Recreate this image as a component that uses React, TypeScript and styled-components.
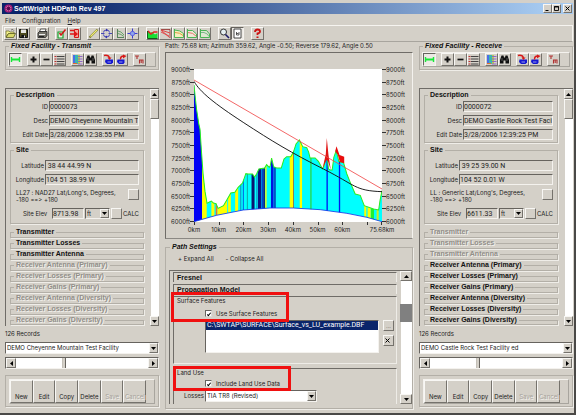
import React from 'react';
import styled, { createGlobalStyle, css } from 'styled-components';

const FACE = '#d4d0c8';
const NAVY = '#0a246a';
const DARK = '#6f6c67';
const EDGE = '#b3afa7';

const Global = createGlobalStyle`
  *, *::before, *::after { box-sizing: border-box; }
  html, body { margin: 0; padding: 0; }
  body {
    background: ${FACE};
    color: #222;
    font: 6px/8px Inter, "Liberation Sans", sans-serif;
    font-feature-settings: "calt" 0;
  }
  button, input, select { font: inherit; color: inherit; margin: 0; padding: 0; border-radius: 0; }
  fieldset { margin: 0; min-width: 0; }
  svg { display: block; }
`;

const raised = css`
  border: 1px solid;
  border-color: #f8f7f4 #75726c #75726c #f8f7f4;
  background: ${FACE};
`;
const sunken = css`
  border: 1px solid;
  border-color: #66635e #f4f2ee #f4f2ee #66635e;
`;

const Window = styled.div`
  min-height: 100vh;
  display: flex;
  flex-direction: column;
  background: ${FACE};
  border-right: 2px solid #4a4947;
  border-bottom: 2px solid #4a4947;
`;
const TitleBar = styled.header`
  display: flex;
  align-items: center;
  height: 11px;
  margin: 3px 1px 0 2px;
  padding: 0 1px 0 2px;
  color: #fff;
  background: linear-gradient(90deg, #0a246a 10%, #a6caf0 95%);
`;
const Title = styled.h1`
  flex: 1;
  margin: 0 0 0 1px;
  font: bold 7px/10px "Liberation Sans", sans-serif;
`;
const CaptionButton = styled.button`
  ${raised}
  width: 9px;
  height: 9px;
  &:last-child { margin-left: 2px; }
`;
const Menu = styled.nav`
  display: flex;
  gap: 7px;
  padding: 1px 5px 0;
  height: 11px;
`;
const MenuItem = styled.button`
  border: 0;
  background: none;
  line-height: 9px;
`;
const ToolBar = styled.div`
  display: flex;
  height: 17px;
  margin: 0 1px 0 2px;
  padding: 1px 0 0 1px;
  border: 1px solid;
  border-color: #f6f4f0 #f6f4f0 #a8a59e #f6f4f0;
`;
const ToolGroup = styled.div<{ $lead?: number }>`
  display: flex;
  margin-left: ${p => p.$lead ?? 0}px;
`;
const ToolButton = styled.button<{ $down?: boolean }>`
  ${p => (p.$down ? sunken : raised)}
  width: 13px;
  height: 13px;
  background: ${p => (p.$down ? '#ece9e4' : FACE)};
`;
const Columns = styled.main`
  flex: 1;
  display: grid;
  grid-template-columns: 154fr 248fr 154fr;
  gap: 6px;
  padding: 0 1px 4px 5px;
`;
const Column = styled.section`
  display: flex;
  flex-direction: column;
  min-width: 0;
`;
const Box = styled.fieldset`
  border: 1px solid ${EDGE};
  box-shadow: 1px 1px 0 #efede8;
  padding: 2px;
`;
const ScriptLegend = styled.legend`
  margin-left: 1px;
  padding: 0 2px;
  color: #111;
  font: italic bold 7px/8px "Liberation Sans", sans-serif;
`;
const Legend = styled.legend<{ $off?: boolean }>`
  padding: 0 2px;
  font: bold 7px/8px "Liberation Sans", sans-serif;
  color: ${p => (p.$off ? '#918e88' : '#111')};
  text-shadow: ${p => (p.$off ? '1px 1px 0 #f1efeb' : 'none')};
`;
const FacilityBar = styled.div`
  display: flex;
  gap: 5px;
  border: 1px solid;
  border-color: #f4f2ee #a8a59e #a8a59e #f4f2ee;
`;
const ScrollFrame = styled.div<{ $top: number }>`
  display: flex;
  flex: 1;
  margin-top: ${p => p.$top}px;
  border-top: 1px solid ${DARK};
  border-left: 1px solid ${DARK};
`;
const ScrollBody = styled.div`
  flex: 1;
  min-width: 0;
  padding: 2px 6px 0 4px;
`;
const ScrollTrack = styled.div<{ $w: number }>`
  display: flex;
  flex-direction: column;
  justify-content: space-between;
  width: ${p => p.$w}px;
  background: linear-gradient(90deg, ${FACE} 1px, #fff 1px);
`;
const ArrowButton = styled.button`
  ${raised}
  display: grid;
  place-items: center;
  height: 10px;
  min-width: 9px;
`;
const TopThumb = styled.div`
  ${raised}
  height: 20px;
  margin-bottom: auto;
`;
const DarkThumb = styled.div`
  height: 18px;
  margin: 23px 0 auto;
  background: #808080;
`;
const Details = styled(Box)<{ $lead: number; $top?: number; $end: number }>`
  display: flex;
  flex-direction: column;
  gap: 3px;
  margin-top: ${p => p.$top ?? 0}px;
  padding: ${p => p.$lead}px 4px ${p => p.$end}px 3px;
`;
const Field = styled.label<{ $label: number }>`
  display: grid;
  grid-template-columns: ${p => p.$label}px minmax(0, 1fr);
  column-gap: 1px;
  text-align: right;
  line-height: 12px;
  height: 11px;
`;
const TextInput = styled.input`
  ${sunken}
  width: 100%;
  min-width: 0;
  height: 11px;
  background: ${FACE};
  font: 7px/9px Roboto, sans-serif;
  outline: 0;
`;
const DatumRow = styled.div`
  display: flex;
  justify-content: space-between;
  align-items: flex-start;
  height: 14px;
  margin: 1px 0 2px 2px;
  line-height: 7px;
  white-space: nowrap;
`;
const TinyButton = styled.button`
  ${raised}
  flex: none;
  width: 11px;
  height: 11px;
  line-height: 8px;
  text-align: center;
  color: #6d6a66;
`;
const ElevRow = styled.div`
  display: flex;
  align-items: center;
  gap: 1px;
  height: 11px;
  margin-left: 9px;
`;
const ElevField = styled.label`
  display: grid;
  grid-template-columns: 28px 32px;
  column-gap: 1px;
  align-items: center;
`;
const Combo = styled.label<{ $flat?: boolean }>`
  ${sunken}
  display: flex;
  height: 12px;
  min-width: 0;
  background: ${p => (p.$flat ? FACE : '#fff')};
`;
const Select = styled.select`
  flex: 1;
  min-width: 0;
  appearance: none;
  border: 0;
  padding-left: 1px;
  background: transparent;
  line-height: 10px;
  outline: 0;
`;
const DropMark = styled.span`
  ${raised}
  display: grid;
  place-items: center;
  width: 9px;
`;
const UnitCombo = styled(Combo)`
  width: 26px;
  height: 11px;
`;
const Section = styled(Box)`
  margin-bottom: 1px;
  padding: 0 3px 1px;
  cursor: pointer;
  &:last-child { margin-bottom: 0; padding-bottom: 0; }
`;
const Sections = styled.div`
  margin-top: 4px;
`;
const Footer = styled.footer`
  margin-bottom: 2px;
`;
const Records = styled.p`
  margin: 4px 0 4px;
`;
const Scroller = styled.div`
  display: grid;
  grid-template-columns: 10px 1fr 10px;
  height: 12px;
  margin: 3px 0 6px;
  ${sunken}
  background: #fff;
`;
const Range = styled.input`
  appearance: none;
  width: 100%;
  height: 10px;
  background: #fff;
  &::-webkit-slider-thumb {
    appearance: none;
    width: 4px;
    height: 10px;
    background: ${FACE};
    border-right: 1px solid #66635e;
    border-left: 1px solid #c4c0b8;
  }
`;
const Actions = styled.div`
  border: 1px solid ${EDGE};
  box-shadow: 1px 1px 0 #efede8;
  padding: 3px 3px 2px;
`;
const ActionBar = styled.div`
  display: grid;
  grid-template-columns: repeat(6, 23fr) 8fr;
  border: 1px solid;
  border-color: #f4f2ee #a8a59e #a8a59e #f4f2ee;
`;
const ActionButton = styled.button`
  ${raised}
  display: flex;
  align-items: flex-end;
  justify-content: center;
  height: 23px;
  padding-bottom: 1px;
  &:disabled { color: #a5a29b; text-shadow: 1px 1px 0 #f4f2ee; }
`;
const PathLine = styled.p`
  margin: 0 0 2px;
  line-height: 8px;
  white-space: nowrap;
`;
const ChartPanel = styled.div`
  border: 1px solid;
  border-color: ${DARK} #f4f2ee #8b8883 ${DARK};
  margin-bottom: 4px;
`;
const Chart = styled.svg`
  width: 100%;
  height: auto;
  font: 6px Inter, sans-serif;
`;
const Settings = styled(Box)`
  flex: 1;
  display: flex;
  flex-direction: column;
  padding: 4px 0 4px 3px;
`;
const Expanders = styled.div`
  display: flex;
  gap: 12px;
  padding-left: 9px;
`;
const PlainButton = styled.button`
  border: 0;
  background: none;
`;
const SettingsBody = styled.div`
  flex: 1;
  display: flex;
  flex-direction: column;
  gap: 2px;
  min-width: 0;
  padding: 1px 3px 0;
`;
const Pane = styled.div`
  position: relative;
  border-top: 1px solid ${DARK};
  border-left: 1px solid ${DARK};
  border-right: 1px solid #eeece7;
  padding-left: 3px;
`;
const HeadPane = styled(Pane)`
  height: 10px;
  font: bold 7px/9px "Liberation Sans", sans-serif;
  color: #111;
`;
const SurfacePane = styled(Pane)`
  height: 68px;
  border-bottom: 1px solid #eeece7;
`;
const LandPane = styled(Pane)`
  margin-top: 2px;
  min-height: 36px;
`;
const Check = styled.label<{ $top: number }>`
  display: flex;
  align-items: center;
  gap: 4px;
  height: 9px;
  margin: ${p => p.$top}px 0 2px 28px;
`;
const Tick = styled.input`
  appearance: none;
  display: grid;
  place-items: center;
  width: 7px;
  height: 7px;
  background: #fff;
  border: 1px solid;
  border-color: #66635e #dedbd5 #dedbd5 #66635e;
  &:checked::before {
    content: '';
    width: 2px;
    height: 4px;
    border: solid #000;
    border-width: 0 1px 1px 0;
    transform: rotate(40deg);
  }
`;
const FileArea = styled.div`
  display: flex;
  gap: 4px;
  margin: 0 2px 0 28px;
`;
const FileList = styled.ul`
  ${sunken}
  flex: 1;
  height: 33px;
  margin: 0;
  padding: 0;
  list-style: none;
  background: #fff;
`;
const FileItem = styled.li`
  padding-left: 1px;
  color: #fff;
  background: ${NAVY};
  font: 7px/9px Roboto, sans-serif;
`;
const FileButtons = styled.div`
  display: flex;
  flex-direction: column;
  gap: 4px;
`;
const LossRow = styled.div`
  display: grid;
  grid-template-columns: 27px 112px;
  column-gap: 1px;
  align-items: center;
  text-align: right;
`;
const Highlight = styled.div<{ $x: number; $y: number; $h: number }>`
  position: absolute;
  left: ${p => p.$x}px;
  top: ${p => p.$y}px;
  width: 118px;
  height: ${p => p.$h}px;
  border: 3px solid #f01010;
  pointer-events: none;
`;

type Dir = 'up' | 'down' | 'left' | 'right';
const arrows: Record<Dir, string> = {
  up: 'M0 4L2.500 1L5 4Z',
  down: 'M0 1L5 1L2.500 4Z',
  left: 'M4 0L1 2.500L4 5Z',
  right: 'M1 0L4 2.500L1 5Z',
};
const Arrow = ({ dir }: { dir: Dir }) => (
  <svg width="5" height="5" viewBox="0 0 5 5"><path d={arrows[dir]} fill="#000" /></svg>
);

const glyphs: Record<string, React.ReactNode> = {
  open: <><path d="M1 3h3l1 1h4v2H3L1 9z" fill="#f4f28a" stroke="#66662a" strokeWidth=".7" /><path d="M1 9.500L3.500 5.500H10.500L8.500 9.500z" fill="#d8d868" stroke="#4c4c18" strokeWidth=".7" /><path d="M6 2q2-1.500 3 .7" stroke="#333" fill="none" strokeWidth=".6" /></>,
  save: <><path d="M1.500 1.500h8v8h-8z" fill="#4c4a1c" stroke="#111" /><path d="M3 1.500h5v3.500H3z" fill="#e6e6e0" /><path d="M3.500 7h4v3h-4z" fill="#111" /><path d="M6 7.500h1v2H6z" fill="#ddd" /></>,
  print: <><path d="M3.500 1h5.500l-1 3H2.500z" fill="#fff" stroke="#333" strokeWidth=".8" /><path d="M1 5l1.500-1.500h7.500v4L8.500 9.500H1z" fill="#77756c" stroke="#222" strokeWidth=".8" /><path d="M2 6.500h6" stroke="#eee" /><path d="M2 8.500h5" stroke="#222" /></>,
  check: <><path d="M2 4h5v6H2z" fill="#e8f4e4" stroke="#17a02c" strokeWidth="1.200" /><path d="M3.500 5l1.500 2 4.500-5.500" fill="none" stroke="#d01818" strokeWidth="1.500" /></>,
  exit: <><path d="M5.500 1.500h4v8h-4z" fill="#f5a59c" stroke="#d21818" /><path d="M1 2.500h4M1 6h6M5 3.500l3 2.500-3 2.500" fill="none" stroke="#e01818" strokeWidth="1.400" /></>,
  pencil: <><path d="M1.500 9.500L9.500 1.500" stroke="#77772a" strokeWidth="2" /><path d="M2.500 8.500L9 2" stroke="#f1ee76" strokeWidth="1.100" /></>,
  cycle: <><path d="M2.500 4.500Q2.500 2 5.500 2T8.500 4.500M8.500 6.500q0 2.500-3 2.500T2.500 6.500" fill="none" stroke="#4848b8" /><path d="M0 5.500h3.500M7.500 5.500h3.500" stroke="#4848b8" /><path d="M5 .5l2 1.500-2 1.500zM6 7.500l-2 1.500 2 1.500z" fill="#3030b0" /></>,
  profile: <><path d="M3.500 1v9M3.500 9.500h6.500" stroke="#56835a" /><path d="M4 3l3 1 3 3M4 5.500l3 1 3 2" fill="none" stroke="#6aa76c" /></>,
  cross: <><path d="M5.500 .5v10M.5 5.500h10" stroke="#3a3ad0" /><circle cx="5.500" cy="5.500" r="2.200" fill="#8da3ee" stroke="#4848d8" strokeWidth=".7" /></>,
  terrain: <><path d="M.5 3v7.500h10V5L8 6.500 5 4 3 5z" fill="#18df34" /><path d="M1 3l3 3 3-2 3.500 0" stroke="#e02222" fill="none" strokeWidth="1.500" /><path d="M.5 3v7.500h10" fill="none" stroke="#145a1c" /></>,
  fan: <><path d="M1 1.500h9v8.500" fill="none" stroke="#8a1414" strokeWidth=".7" /><path d="M1 2L9.500 9.500M1 4l8 4M1 2l9 3" stroke="#e04848" /></>,
  curveA: <><path d="M1.500 1v8.500h9V5.500Q7 2 1.500 2" fill="#f4efc0" stroke="#3cb04a" strokeWidth=".9" /><path d="M2 4.500q5 0 8 3" stroke="#e0a044" fill="none" /></>,
  curveB: <><path d="M1.500 1v8.500h9V6L6.500 2.500H2" fill="#efe8d8" stroke="#3cb04a" strokeWidth=".9" /><path d="M2 4.500q5 0 8 3.500" stroke="#e07a6a" fill="none" /></>,
  curveC: <><path d="M1.500 1v8.500h9V6L7.500 2.500H2" fill="#dfe7d2" stroke="#3cb04a" strokeWidth=".9" /><path d="M2 4.500h3q4 1 5 4" stroke="#7ab88a" fill="none" /></>,
  zoom: <><circle cx="4.500" cy="4" r="3" fill="#e6f0f2" stroke="#222" strokeWidth=".9" /><path d="M6.500 6.500l3.500 3.500" stroke="#1a1a66" strokeWidth="1.600" /></>,
  page: <><path d="M2 1h7v9H2z" fill="#fff" stroke="#333" strokeWidth=".9" /><path d="M4.500 4v3h2.500V4M4.500 5.500h2" stroke="#333" fill="none" strokeWidth=".8" /></>,
  help: <><path d="M3 4q0-2.500 2.500-2.500T8 3.500Q8 5 5.500 5.500V7" fill="none" stroke="#cc1414" strokeWidth="1.800" /><path d="M4.500 8.500h2v1.500h-2z" fill="#cc1414" /></>,
  link: <><path d="M1.500 3v5M9.500 3v5" stroke="#18e838" strokeWidth="1.400" /><path d="M1 5.500h9" stroke="#18e838" strokeWidth="2" /></>,
  plus: <path d="M5.500 2.500v6M2.500 5.500h6" stroke="#111" strokeWidth="2" />,
  minus: <path d="M2.500 5.500h6" stroke="#111" strokeWidth="1.700" />,
  list: <><path d="M3 2.500h7.500M3 5h7.500M3 7.500h7.500M3 10h7.500" stroke="#333" strokeWidth=".9" /><path d="M.5 2.500h2M.5 5h2M.5 7.500h2M.5 10h2" stroke="#c03030" /></>,
  colors: <><path d="M1 1h3v9H1z" fill="#4a6fe8" /><path d="M3 1h3v9H3z" fill="#39b7b0" /><path d="M6 1h2v9H6z" fill="#b8cc50" /><path d="M6 2.500h4.500M6 5h4.500M6 7.500h4.500M6 10h4.500" stroke="#8a5bc8" strokeWidth=".9" /><path d="M1 9.500h4" stroke="#e06a30" /></>,
  find: <><path d="M2.500 1.500h2l.5 2h1l.5-2h2L10 6v3.500H6.500V6.500h-2v3H1V6z" fill="#111" /><path d="M3 4v3M8 4v3" stroke="#888" strokeWidth=".6" /></>,
  fetch: <><path d="M2.500 5.500h7.500v3L8.500 10H4L2 8z" fill="#1518d0" /><path d="M1 1.500q4.500-1 5.500 2.500" fill="none" stroke="#d81818" strokeWidth="1.400" /><path d="M4.500 3.500h4l-2 2.500z" fill="#d81818" /><path d="M4.500 8h3.500" stroke="#cfd0f6" strokeWidth=".7" /></>,
  send: <><path d="M1.500 5.500h7v3L7.500 10H3L1 8z" fill="#1518d0" /><path d="M4.500 5.500q0-3.500 3-3.500" fill="none" stroke="#d81818" strokeWidth="1.400" /><path d="M7 .5v4l3.500-2.500z" fill="#d81818" /><path d="M3 8h3.500" stroke="#cfd0f6" strokeWidth=".7" /></>,
  tower: <><path d="M1 2h4M3 2v3" stroke="#b03030" strokeWidth="1.100" /><path d="M5.500 9.500V5.500M9 9.500V5.500M5 6h4.500M7.200 6v3" fill="none" stroke="#b03030" strokeWidth="1.100" /></>,
  minimize: <path d="M1.500 5.500h3" stroke="#000" />,
  maximize: <path d="M1.500 1.500h4v4h-4zM1 2h5" stroke="#000" fill="none" strokeWidth=".9" />,
  close: <path d="M1.500 1.500l4 4M5.500 1.500l-4 4" stroke="#000" />,
};
const Glyph = ({ name, size = 11 }: { name: string; size?: number }) => (
  <svg width={size} height={size} viewBox={`0 0 ${size} ${size}`} aria-hidden="true">{glyphs[name]}</svg>
);

const mainTools: { lead: number; items: string[] }[] = [
  { lead: 0, items: ['open', 'save'] },
  { lead: 6, items: ['print'] },
  { lead: 6, items: ['check', 'exit'] },
  { lead: 6, items: ['pencil', 'cycle', 'profile', 'cross'] },
  { lead: 7, items: ['terrain', 'fan', 'curveA', 'curveB', 'curveC'] },
  { lead: 7, items: ['zoom', 'page'] },
  { lead: 7, items: ['help'] },
];
const facilityTools = [['link'], ['plus', 'minus', 'list'], ['colors', 'find'], ['fetch', 'send'], ['tower']];
const sections = [
  'Transmitter', 'Transmitter Losses', 'Transmitter Antenna',
  'Receiver Antenna (Primary)', 'Receiver Losses (Primary)', 'Receiver Gains (Primary)',
  'Receiver Antenna (Diversity)', 'Receiver Losses (Diversity)', 'Receiver Gains (Diversity)',
];

interface Facility {
  role: 'Transmit' | 'Receive';
  id: string; desc: string; date: string; lat: string; lon: string;
  datum: string; elev: string; record: string;
}
const transmit: Facility = {
  role: 'Transmit', id: '0000073', desc: 'DEMO Cheyenne Mountain Test Facility', date: '3/28/2006 12:38:55 PM',
  lat: ' 38 44 44.99 N', lon: '104 51 38.99 W', datum: "LL27 : NAD27 Lat/Long's, Degrees,",
  elev: '8713.98', record: 'DEMO Cheyenne Mountain Test Facility',
};
const receive: Facility = {
  role: 'Receive', id: '0000072', desc: 'DEMO Castle Rock Test Facility ed', date: '3/28/2006 12:39:25 PM',
  lat: ' 39 25 39.00 N', lon: '104 52 0.01 W', datum: "LL : Generic Lat/Long's, Degrees,",
  elev: '6611.33', record: 'DEMO Castle Rock Test Facility ed',
};

function FacilityColumn({ data }: { data: Facility }) {
  const sending = data.role === 'Transmit';
  return (
    <Column>
      <Box>
        <ScriptLegend>Fixed Facility - {data.role}</ScriptLegend>
        <FacilityBar>
          {facilityTools.map(group => (
            <ToolGroup key={group[0]}>
              {group.map(n => <ToolButton key={n} $down={n === 'link'} aria-label={n}><Glyph name={n} /></ToolButton>)}
            </ToolGroup>
          ))}
        </FacilityBar>
      </Box>
      <ScrollFrame $top={18}>
        <ScrollBody>
          <Details $lead={2} $end={2}>
            <Legend>Description</Legend>
            <Field $label={34}>ID<TextInput defaultValue={data.id} /></Field>
            <Field $label={34}>Desc<TextInput defaultValue={data.desc} /></Field>
            <Field $label={34}>Edit Date<TextInput defaultValue={data.date} /></Field>
          </Details>
          <Details $top={3} $lead={6} $end={4}>
            <Legend>Site</Legend>
            <Field $label={30}>Latitude<TextInput defaultValue={data.lat} /></Field>
            <Field $label={30}>Longitude<TextInput defaultValue={data.lon} /></Field>
            <DatumRow>
              <span>{data.datum}<br />-180 ==&gt; +180</span>
              <TinyButton aria-label="Choose datum" />
            </DatumRow>
            <ElevRow>
              <ElevField>Site Elev<TextInput defaultValue={data.elev} /></ElevField>
              <UnitCombo $flat>
                <Select aria-label="Elevation unit"><option>ft</option></Select>
                <DropMark><Arrow dir="down" /></DropMark>
              </UnitCombo>
              <TinyButton aria-label="Calculate elevation" />
              CALC
            </ElevRow>
          </Details>
          <Sections>
            {sections.map((s, i) => (
              <Section key={s}><Legend $off={sending ? i > 2 : i < 3}>{s}</Legend></Section>
            ))}
          </Sections>
        </ScrollBody>
        <ScrollTrack $w={9}>
          <ArrowButton aria-label="Scroll up"><Arrow dir="up" /></ArrowButton>
          <TopThumb />
          <ArrowButton aria-label="Scroll down"><Arrow dir="down" /></ArrowButton>
        </ScrollTrack>
      </ScrollFrame>
      <Footer>
        <Records>126 Records</Records>
        <Combo>
          <Select aria-label="Record"><option>{data.record}</option></Select>
          <DropMark><Arrow dir="down" /></DropMark>
        </Combo>
        <Scroller>
          <ArrowButton aria-label="Previous record"><Arrow dir="left" /></ArrowButton>
          <Range type="range" aria-label="Record position" defaultValue={36} />
          <ArrowButton aria-label="Next record"><Arrow dir="right" /></ArrowButton>
        </Scroller>
        <Actions>
          <ActionBar>
            {['New', 'Edit', 'Copy', 'Delete'].map(a => <ActionButton key={a}>{a}</ActionButton>)}
            {['Save', 'Cancel'].map(a => <ActionButton key={a} disabled>{a}</ActionButton>)}
          </ActionBar>
        </Actions>
      </Footer>
    </Column>
  );
}

const feet = Array.from({ length: 13 }, (_, i) => 9000 - i * 250);
const kms = [0, 10, 20, 30, 40, 50, 60];
const ground = '0,45 4,85 8,120 14,160 18,178 22,240 27,310 33,365 39,400 46,396 52,393 58,399 66,401 72,415 88,407 98,390 110,369 122,367 132,352 145,339 150,325 155,311 162,312 175,312 181,321 187,312 194,297 211,294 217,284 225,292 228,287 232,264 238,290 247,294 261,294 269,267 277,260 289,260 297,247 305,222 315,210 325,230 337,233 343,247 347,264 362,264 372,274 384,297 389,287 397,252 402,297 407,300 413,300 418,262 425,242 433,274 447,278 457,312 467,337 482,372 497,376 509,407 537,417 552,420 556,392 562,362';
const earth = '562,455 517,442 457,430 377,419 297,414 227,414 147,420 67,436 0,455';
const bands: [number, number, string][] = [
  [0, 24, '#0000f4'], [24, 14, '#ffff00'], [52, 9, '#ffff00'], [65, 5, '#e8742c'], [70, 29, '#ffff00'],
  [102, 8, '#ffff00'], [123, 9, '#ffff00'], [139, 2, '#1c50a0'], [146, 3, '#0060e0'], [158, 3, '#13a8a0'],
  [172, 9, '#0a1470'], [187, 2, '#1c50a0'], [191, 10, '#0a1480'], [202, 4, '#0030d0'], [207, 5, '#0a1480'],
  [213, 4, '#ffff00'], [230, 8, '#0014e0'], [240, 4, '#0014b0'], [286, 11, '#ffff00'], [296, 2, '#a04030'],
  [316, 7, '#ffff00'], [347, 5, '#20e070'], [396, 4, '#0018f0'], [433, 4, '#0018f0'],
  [509, 6, '#ffff00'], [519, 9, '#ffff00'], [529, 9, '#20f030'], [546, 6, '#c8f020'],
];

function PathChart() {
  return (
    <Chart viewBox="0 0 246 185" role="img" aria-label="Path profile">
      <rect x="28" y="16" width="188" height="153" fill="#fff" />
      <g stroke="#333" strokeWidth="1">
        {feet.map((f, i) => {
          const y = Math.round(16 + i * 12.65) + 0.5;
          return <path key={f} d={`M24 ${y}h4M216 ${y}h4`} />;
        })}
        {[0, 1, 2, 3, 4, 5, 6, 7].map(i => <path key={i} d={`M${Math.round(28 + i * 24.7) + 0.5} 169v3`} />)}
        <path d="M215.500 169v3" />
      </g>
      <g fill="#222">
        {feet.map((f, i) => (
          <React.Fragment key={f}>
            <text x="24" y={19 + i * 12.65} textAnchor="end">{f}ft</text>
            <text x="220" y={19 + i * 12.65}>{f}ft</text>
          </React.Fragment>
        ))}
        {kms.map((k, i) => <text key={k} x={28 + i * 24.7} y="179" textAnchor="middle">{k}km</text>)}
        <text x="216" y="179" textAnchor="middle">75.68km</text>
      </g>
      <svg x="28" y="17" width="188" height="152" viewBox="0 0 562 456" preserveAspectRatio="none">
        <clipPath id="land"><polygon points={`${ground} ${earth}`} /></clipPath>
        <g clipPath="url(#land)">
          <rect width="562" height="456" fill="#00ffff" />
          {bands.map(([x, w, c]) => <rect key={x} x={x} width={w} height="456" fill={c} />)}
        </g>
        <polyline points={ground} fill="none" stroke="#2bec1c" strokeWidth="3" />
        <polyline points={earth} fill="none" stroke="#1634e8" strokeWidth="2.500" />
        <path d="M384 297L394 252 397 204 402 255 409 300 400 272 396 270Z" fill="#e01414" />
        <path d="M422 244L426 229 435 255 449 260 449 280 436 276 430 255Z" fill="#e80c0c" />
        <path d="M0 30L562 357" stroke="#f04848" strokeWidth="2.500" />
        <path d="M0 34C18 66 60 100 147 157S290 248 387 297 480 362 562 365" fill="none" stroke="#111" strokeWidth="2.800" />
      </svg>
    </Chart>
  );
}

export default function App() {
  return (
    <Window>
      <Global />
      <TitleBar>
        <svg width="9" height="9" viewBox="0 0 9 9" aria-hidden="true">
          <circle cx="4.500" cy="4.500" r="4" fill="#b01878" />
          <path d="M1 4.500h7M4.500 1v7M2 2l5 5M7 2L2 7" stroke="#4a0a4a" strokeWidth=".8" />
          <circle cx="4.500" cy="4.500" r="2.500" fill="none" stroke="#e890c8" strokeWidth=".6" />
        </svg>
        <Title>SoftWright HDPath Rev 497</Title>
        {['minimize', 'maximize', 'close'].map(n => (
          <CaptionButton key={n} aria-label={n}><Glyph name={n} size={7} /></CaptionButton>
        ))}
      </TitleBar>
      <Menu>
        <MenuItem>File</MenuItem>
        <MenuItem>Configuration</MenuItem>
        <MenuItem><u>H</u>elp</MenuItem>
      </Menu>
      <ToolBar>
        {mainTools.map(g => (
          <ToolGroup key={g.items[0]} $lead={g.lead}>
            {g.items.map(n => <ToolButton key={n} $down={n === 'page'} aria-label={n}><Glyph name={n} /></ToolButton>)}
          </ToolGroup>
        ))}
      </ToolBar>
      <Columns>
        <FacilityColumn data={transmit} />
        <Column>
          <PathLine>Path: 75.68 km; Azimuth 359.62, Angle -0.50; Reverse 179.62, Angle 0.50</PathLine>
          <ChartPanel><PathChart /></ChartPanel>
          <Settings>
            <ScriptLegend>Path Settings</ScriptLegend>
            <Expanders>
              <PlainButton>+ Expand All</PlainButton>
              <PlainButton>- Collapse All</PlainButton>
            </Expanders>
            <ScrollFrame $top={7}>
              <SettingsBody>
                <HeadPane>Fresnel</HeadPane>
                <HeadPane>Propagation Model</HeadPane>
                <SurfacePane>
                  Surface Features
                  <Check $top={4}><Tick type="checkbox" defaultChecked />Use Surface Features</Check>
                  <FileArea>
                    <FileList><FileItem>C:\SWTAP\SURFACE\Surface_vs_LU_example.DBF</FileItem></FileList>
                    <FileButtons>
                      <TinyButton>...</TinyButton>
                      <TinyButton aria-label="Remove"><Glyph name="close" size={7} /></TinyButton>
                    </FileButtons>
                  </FileArea>
                  <Highlight $x={-3} $y={-5} $h={30} />
                </SurfacePane>
                <LandPane>
                  Land Use
                  <Check $top={2}><Tick type="checkbox" defaultChecked />Include Land Use Data</Check>
                  <LossRow>
                    <label htmlFor="losses">Losses</label>
                    <Combo as="div">
                      <Select id="losses"><option>TIA TR8 (Revised)</option></Select>
                      <DropMark><Arrow dir="down" /></DropMark>
                    </Combo>
                  </LossRow>
                  <Highlight $x={-1} $y={-3} $h={25} />
                </LandPane>
              </SettingsBody>
              <ScrollTrack $w={12}>
                <ArrowButton aria-label="Scroll up"><Arrow dir="up" /></ArrowButton>
                <DarkThumb />
                <ArrowButton aria-label="Scroll down"><Arrow dir="down" /></ArrowButton>
              </ScrollTrack>
            </ScrollFrame>
          </Settings>
        </Column>
        <FacilityColumn data={receive} />
      </Columns>
    </Window>
  );
}
